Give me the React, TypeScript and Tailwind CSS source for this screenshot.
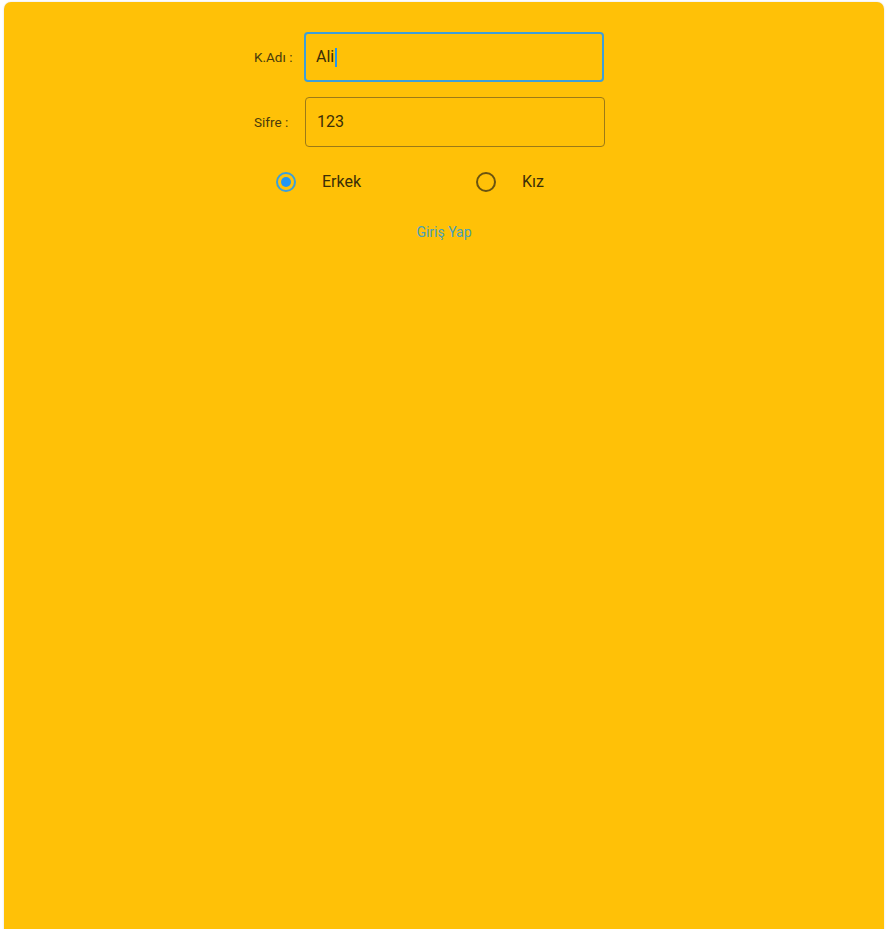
import { useState } from "react"

function Radio({ checked }: { checked: boolean }) {
  return checked ? (
    <span className="flex h-[20px] w-[20px] items-center justify-center rounded-full border-2 border-[#3d9fd9]">
      <span className="h-[10px] w-[10px] rounded-full bg-[#2196f3]" />
    </span>
  ) : (
    <span className="h-[20px] w-[20px] rounded-full border-2 border-[#6b5410]" />
  )
}

export default function App() {
  const [gender, setGender] = useState("erkek")

  return (
    <div className="min-h-[929px] bg-white pl-[4px] pr-[2px] pt-[2px] font-['Roboto',sans-serif]">
      <div className="h-[940px] w-[880px] rounded-[7px] bg-[#ffc107] shadow-[0_0_2px_rgba(0,0,0,0.15)]">
        <div className="flex flex-col pl-[250px] pt-[30px]">
          <div className="flex items-center">
            <span className="w-[50px] text-[13.5px] text-[#4a3b0c]">K.Adı :</span>
            <div className="flex h-[50px] w-[300px] items-center rounded-[4px] border-2 border-[#3d9fd9] px-[10px]">
              <span className="text-[16px] text-[#3a2e08]">Ali</span>
              <span className="ml-[1px] h-[19px] w-[1.5px] bg-[#2196f3]" />
            </div>
          </div>
          <div className="mt-[15px] flex items-center">
            <span className="w-[51px] text-[13.5px] text-[#4a3b0c]">Sifre :</span>
            <div className="flex h-[50px] w-[300px] items-center rounded-[4px] border border-[#9c7a17] px-[11px]">
              <span className="text-[16px] text-[#3a2e08]">123</span>
            </div>
          </div>
          <div className="mt-[23px] flex items-center pl-[22px]">
            <button onClick={() => setGender("erkek")} className="flex w-[200px] items-center">
              <Radio checked={gender === "erkek"} />
              <span className="ml-[26px] text-[16px] text-[#3a2e08]">Erkek</span>
            </button>
            <button onClick={() => setGender("kiz")} className="flex items-center">
              <Radio checked={gender === "kiz"} />
              <span className="ml-[26px] text-[16px] text-[#3a2e08]">Kız</span>
            </button>
          </div>
        </div>
        <div className="mt-[28px] flex justify-center">
          <button className="text-[14px] text-[#4aa0b8]">Giriş Yap</button>
        </div>
      </div>
    </div>
  )
}
